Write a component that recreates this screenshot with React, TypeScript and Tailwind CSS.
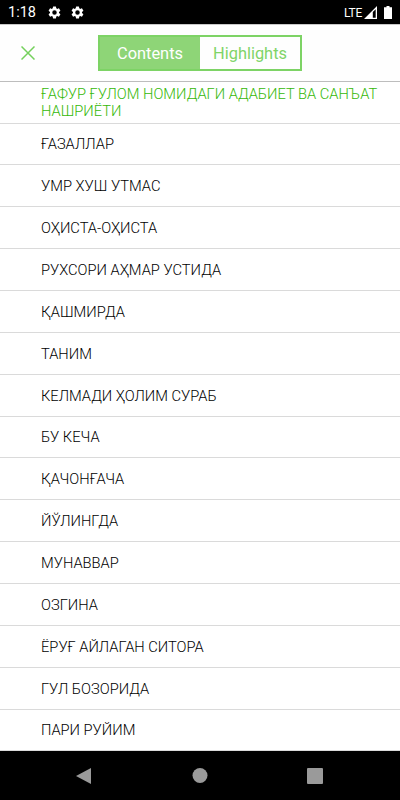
import React from 'react';
import { clsx } from 'clsx';

interface Chapter {
  title: string;
  current?: boolean;
}

const chapters: Chapter[] = [
  { title: 'ҒАФУР ҒУЛОМ НОМИДАГИ АДАБИЕТ ВА САНЪАТ НАШРИЁТИ', current: true },
  { title: 'ҒАЗАЛЛАР' },
  { title: 'УМР ХУШ УТМАС' },
  { title: 'ОҲИСТА-ОҲИСТА' },
  { title: 'РУХСОРИ АҲМАР УСТИДА' },
  { title: 'ҚАШМИРДА' },
  { title: 'ТАНИМ' },
  { title: 'КЕЛМАДИ ҲОЛИМ СУРАБ' },
  { title: 'БУ КЕЧА' },
  { title: 'ҚАЧОНҒАЧА' },
  { title: 'ЙЎЛИНГДА' },
  { title: 'МУНАВВАР' },
  { title: 'ОЗГИНА' },
  { title: 'ЁРУҒ АЙЛАГАН СИТОРА' },
  { title: 'ГУЛ БОЗОРИДА' },
  { title: 'ПАРИ РУЙИМ' },
];

function GearIcon() {
  return (
    <svg viewBox="0 0 24 24" className="h-[15px] w-[15px] fill-white">
      <path d="M19.14 12.94c.04-.3.06-.61.06-.94s-.02-.64-.07-.94l2.03-1.58a.49.49 0 0 0 .12-.61l-1.92-3.32a.49.49 0 0 0-.59-.22l-2.39.96a7 7 0 0 0-1.62-.94l-.36-2.54a.48.48 0 0 0-.48-.41h-3.84a.48.48 0 0 0-.47.41l-.36 2.54c-.59.24-1.13.57-1.62.94l-2.39-.96a.48.48 0 0 0-.59.22L2.74 8.87a.48.48 0 0 0 .12.61l2.03 1.58c-.05.3-.09.63-.09.94s.02.64.07.94l-2.03 1.58a.49.49 0 0 0-.12.61l1.92 3.32c.12.22.37.29.59.22l2.39-.96c.5.38 1.03.7 1.62.94l.36 2.54c.05.24.24.41.48.41h3.84c.24 0 .44-.17.47-.41l.36-2.54a7 7 0 0 0 1.62-.94l2.39.96c.22.08.47 0 .59-.22l1.92-3.32a.48.48 0 0 0-.12-.61zM12 15.6a3.6 3.6 0 1 1 0-7.2 3.6 3.6 0 0 1 0 7.2z" />
    </svg>
  );
}

function StatusBar() {
  return (
    <div className="flex h-6 shrink-0 items-center bg-black pt-px pr-2 pl-2 text-white">
      <span className="w-[38.5px] text-[14.5px]">1:18</span>
      <div className="flex gap-[8px]">
        <GearIcon />
        <GearIcon />
      </div>
      <span className="ml-auto text-[12px] tracking-[-0.3px]">LTE</span>
      <svg viewBox="0 0 13 13" className="ml-0.5 h-[13px] w-[13px] fill-white">
        <path fillRule="evenodd" d="M13 0v13H0zM11.7 3.2L8.8 6.1v5.6h2.9z" />
      </svg>
      <svg viewBox="0 0 8 13" className="ml-[7px] h-[13px] w-2 fill-white">
        <path d="M2.5 0h3v1.3H8V13H0V1.3h2.5z" />
      </svg>
    </div>
  );
}

function Header() {
  return (
    <header className="flex h-[58px] shrink-0 items-center border-t border-b border-t-[#c8c8c8] border-b-[#bdbdbd] bg-[#fefefe] pl-[21px]">
      <svg viewBox="0 0 14 14" className="h-[14px] w-[14px] stroke-[#74d05c]" strokeWidth="1.5">
        <path d="M.5.5l13 13M13.5.5l-13 13" />
      </svg>
      <div className="ml-[63px] flex h-9 w-[204px] border-2 border-[#7dd365] text-[16.4px]">
        <button className="w-[100px] bg-[#8ed577] pt-0.5 text-white">Contents</button>
        <button className="flex-1 pt-0.5 text-[#7fd468]">Highlights</button>
      </div>
    </header>
  );
}

function ChapterRow({ title, current }: Chapter) {
  return (
    <li
      className={clsx(
        'flex shrink-0 items-center border-b border-[#dadada] pr-4 pl-[41px] text-[14.68px] leading-[17px] font-light',
        current ? 'h-[41.5px] pt-0.5 text-[#35b808]' : 'h-[41.87px] pt-0.5 text-black'
      )}
    >
      {title}
    </li>
  );
}

function NavigationBar() {
  return (
    <nav className="flex h-[49px] shrink-0 items-center bg-black">
      <svg viewBox="0 0 400 49" className="h-[49px] w-full fill-[#9a9a9a]">
        <path d="M91 17v16l-15-8z" />
        <circle cx="200" cy="24.5" r="7.5" />
        <rect x="307" y="17" width="16" height="16" rx="1" />
      </svg>
    </nav>
  );
}

export default function App() {
  return (
    <div className="flex h-[800px] w-[400px] flex-col overflow-hidden bg-white font-['Roboto',sans-serif]">
      <StatusBar />
      <Header />
      <ul className="flex min-h-0 flex-1 flex-col overflow-hidden">
        {chapters.map((chapter) => (
          <ChapterRow key={chapter.title} {...chapter} />
        ))}
      </ul>
      <NavigationBar />
    </div>
  );
}
